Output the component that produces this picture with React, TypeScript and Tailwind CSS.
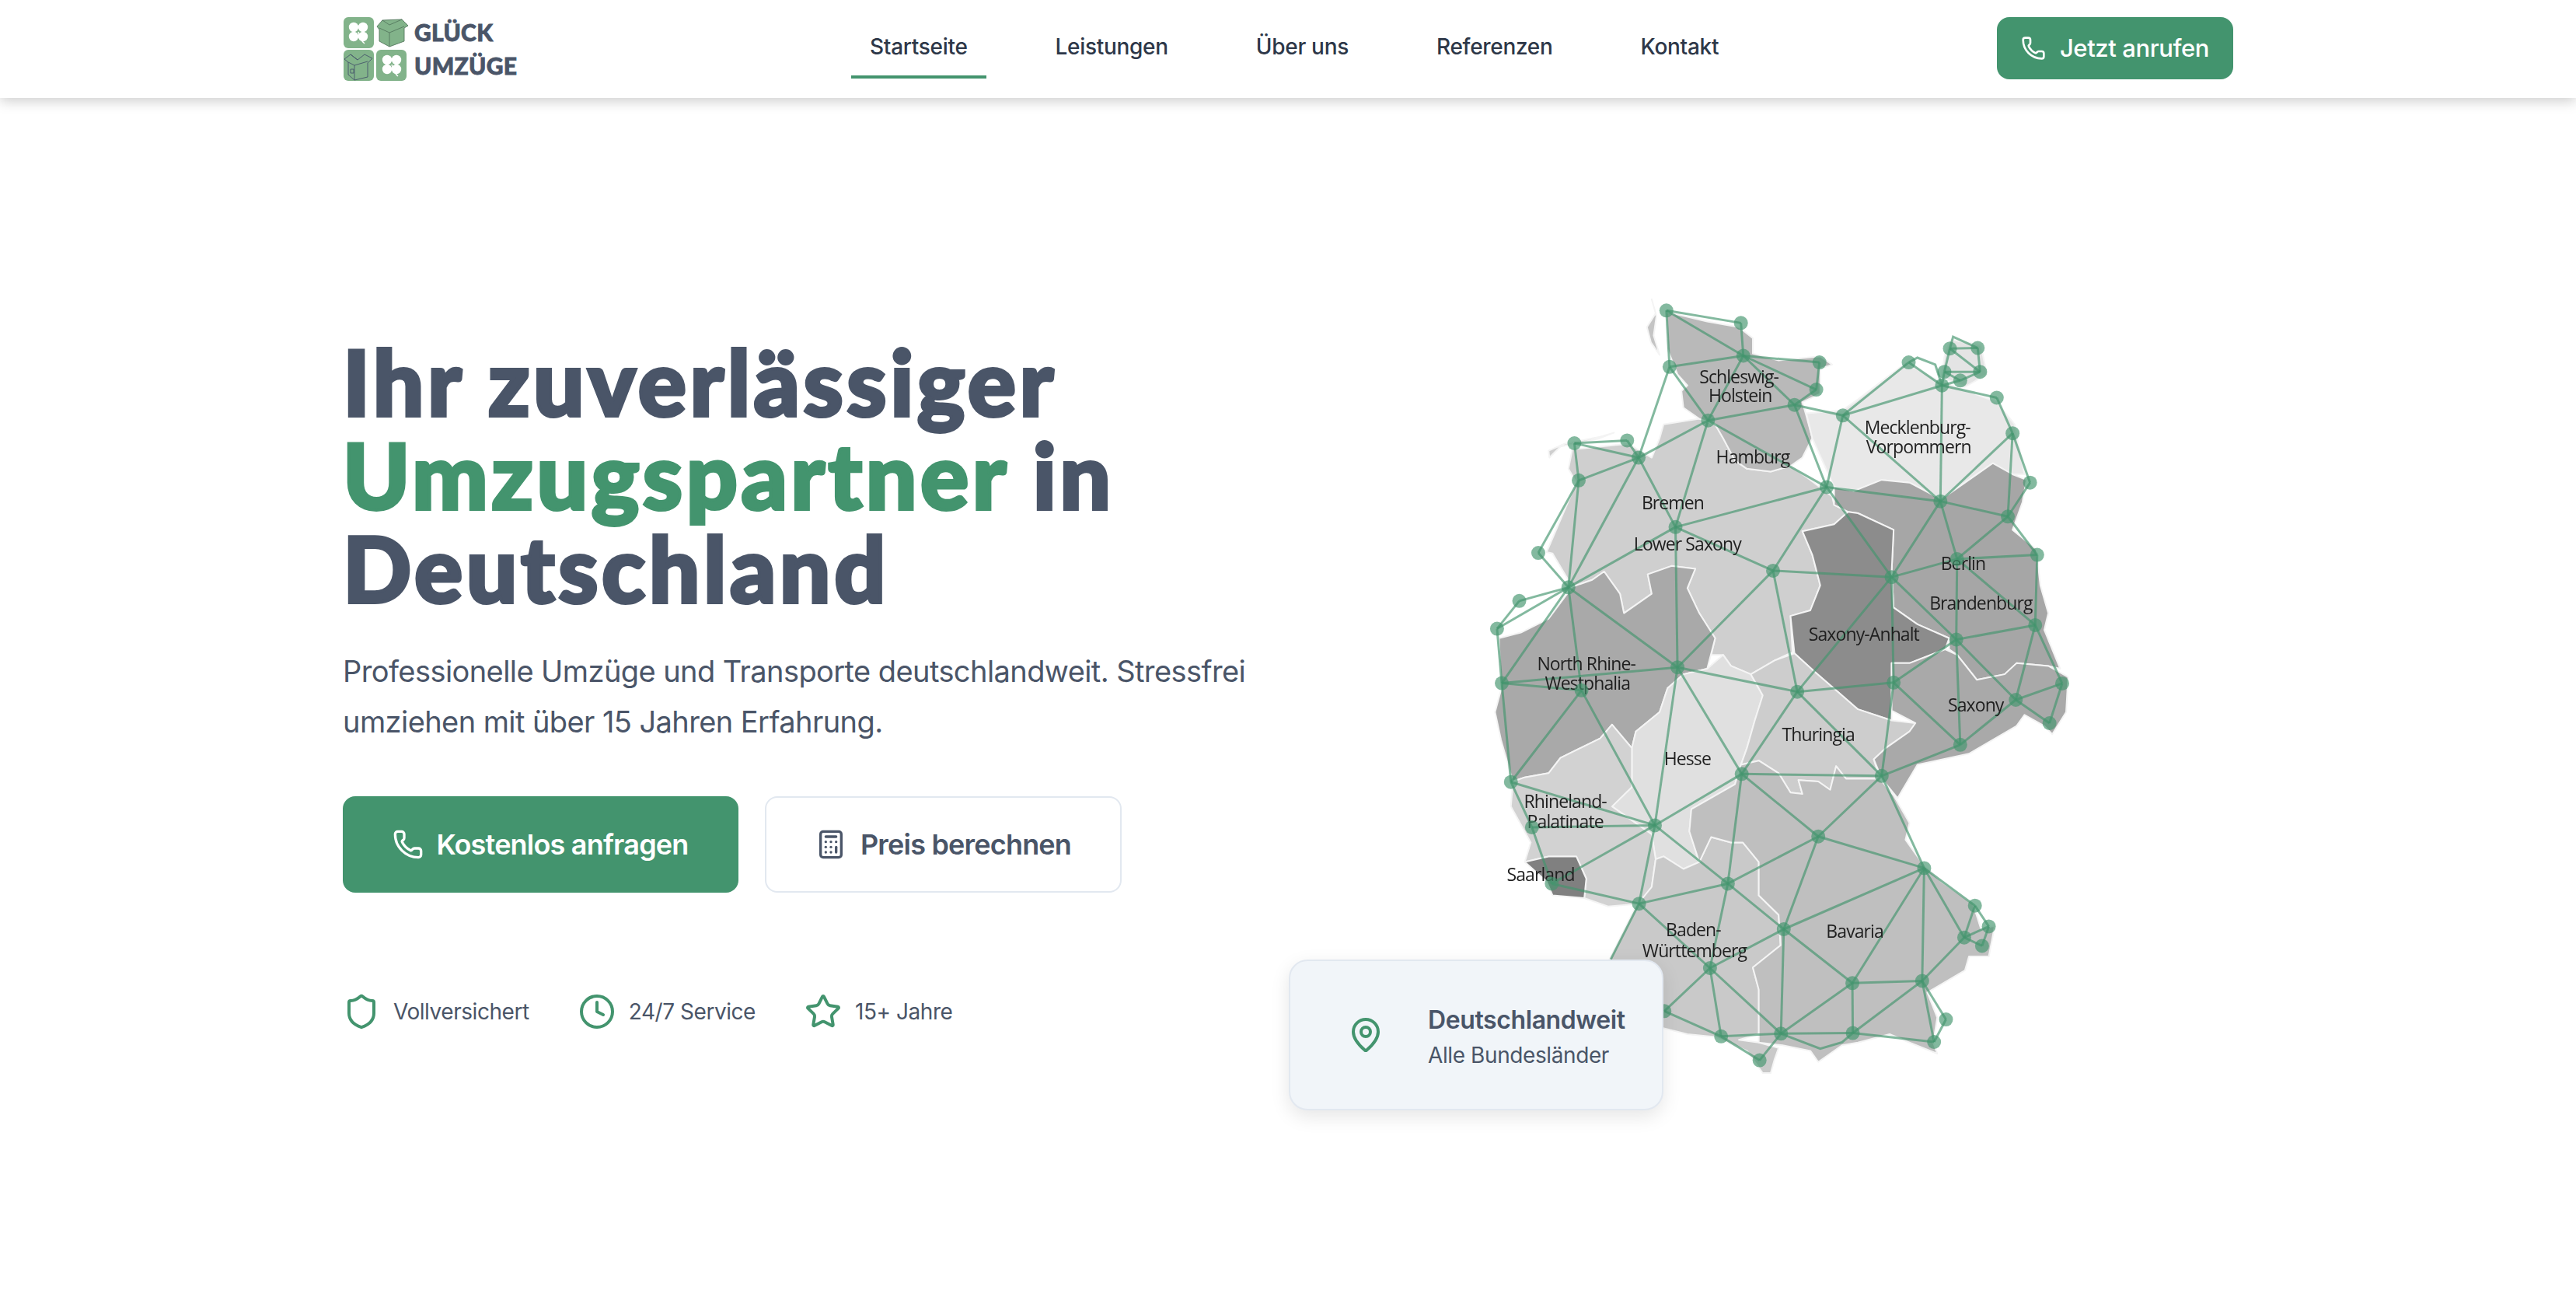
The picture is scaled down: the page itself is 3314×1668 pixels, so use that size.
import { Calculator, Clock, MapPin, Phone, Shield, Star } from "lucide-react";

type P = [number, number];
const OX = 1705;
const px = ([x, y]: P): P => [1880 + x / 1.96 - OX, y / 2.8];
const Z3 = 1456;
const z3 = (pts: number[][]): P[] => pts.map(([x, y]) => [x, y + Z3] as P);

const regions: { fill: string; pts: P[] }[] = [
  {
    fill: "#cfcfcf",
    pts: [[510,520],[600,500],[640,520],[660,570],[690,650],[720,680],[780,690],[830,670],[880,720],[935,780],[940,810],[975,835],[940,880],[860,905],[885,990],[905,1100],[880,1190],[830,1210],[835,1340],[790,1370],[730,1420],[680,1390],[660,1350],[630,1350],[640,1290],[600,1200],[570,1110],[590,1040],[530,1030],[470,1060],[480,1130],[410,1200],[400,1130],[360,1050],[330,1080],[280,1105],[230,985],[215,980],[290,730],[270,680],[280,610],[420,590],[480,640],[500,570]],
  },
  {
    fill: "#b9b9b9",
    pts: [[517,115],[620,150],[700,170],[735,210],[735,265],[800,290],[905,275],[935,305],[905,320],[905,410],[860,440],[870,490],[885,570],[860,640],[830,670],[780,690],[720,680],[690,650],[660,570],[640,520],[600,500],[560,460],[555,400],[570,380],[545,340],[520,250]],
  },
  {
    fill: "#e8e8e8",
    pts: [[870,480],[960,470],[1000,430],[1120,300],[1200,360],[1350,440],[1395,520],[1420,700],[1390,700],[1340,660],[1280,720],[1210,790],[1130,730],[1060,720],[990,760],[940,745],[885,570]],
  },
  {
    fill: "#a6a6a6",
    pts: [[940,745],[990,760],[1060,720],[1130,730],[1210,790],[1280,720],[1340,660],[1390,700],[1425,720],[1415,800],[1390,900],[1450,970],[1460,1100],[1480,1200],[1470,1260],[1510,1400],[1480,1390],[1400,1380],[1370,1420],[1300,1440],[1250,1350],[1230,1330],[1230,1290],[1150,1240],[1090,1180],[1085,1050],[1090,900],[1000,840],[975,835],[940,810]],
  },
  {
    fill: "#8c8c8c",
    pts: [[975,835],[1000,840],[1090,900],[1085,1050],[1090,1180],[1150,1240],[1230,1290],[1220,1330],[1130,1380],[1085,1380],[1085,1586],[1000,1546],[955,1490],[890,1410],[840,1345],[830,1210],[880,1190],[905,1100],[885,990],[860,905],[940,880]],
  },
  {
    fill: "#a9a9a9",
    pts: [[280,1105],[330,1080],[360,1050],[400,1130],[410,1200],[480,1130],[470,1060],[530,1030],[590,1040],[570,1110],[600,1200],[640,1290],[620,1400],[560,1420],[520,1470],[500,1556],[440,1626],[430,1686],[380,1601],[350,1651],[250,1721],[220,1776],[160,1791],[130,1806],[100,1656],[85,1556],[100,1476],[95,1290],[150,1270],[220,1220]],
  },
  {
    fill: "#e0e0e0",
    pts: [[520,1470],[560,1420],[620,1400],[660,1350],[680,1390],[730,1420],[760,1496],[740,1586],[720,1686],[705,1746],[690,1816],[580,1906],[575,1986],[600,2096],[560,2121],[510,2076],[490,2086],[480,1996],[380,1896],[430,1826],[430,1686],[440,1626],[500,1556]],
  },
  {
    fill: "#cdcdcd",
    pts: [[730,1420],[790,1370],[840,1345],[890,1410],[955,1490],[1000,1546],[1085,1586],[1145,1596],[1130,1626],[1070,1686],[1040,1726],[1055,1796],[970,1796],[945,1751],[930,1836],[900,1806],[850,1801],[860,1851],[830,1846],[800,1776],[750,1731],[705,1746],[720,1686],[740,1586],[760,1496]],
  },
  {
    fill: "#a9a9a9",
    pts: [[1085,1380],[1130,1380],[1220,1330],[1250,1350],[1300,1440],[1370,1420],[1400,1380],[1480,1390],[1530,1430],[1525,1556],[1490,1636],[1470,1606],[1420,1566],[1400,1606],[1280,1706],[1150,1746],[1100,1866],[1060,1796],[1040,1726],[1070,1686],[1130,1626],[1145,1596],[1085,1551]],
  },
  {
    fill: "#d2d2d2",
    pts: z3([[130,350],[160,335],[220,320],[250,265],[350,195],[380,145],[430,230],[430,370],[380,440],[480,540],[490,630],[480,730],[450,790],[370,800],[310,770],[315,700],[290,620],[220,620],[160,640],[175,570],[125,440]]),
  },
  {
    fill: "#808080",
    pts: z3([[160,640],[220,620],[290,620],[315,700],[310,770],[230,760],[215,710]]),
  },
  {
    fill: "#c9c9c9",
    pts: z3([[480,730],[490,630],[510,620],[560,665],[600,640],[630,550],[680,570],[710,570],[750,640],[750,760],[800,830],[805,940],[735,1020],[750,1100],[750,1260],[700,1280],[750,1290],[800,1310],[790,1350],[780,1400],[760,1400],[720,1320],[640,1270],[570,1260],[515,1240],[400,1200],[370,1000],[440,800]]),
  },
  {
    fill: "#bfbfbf",
    pts: z3([[575,530],[580,450],[690,360],[705,290],[750,275],[800,320],[830,390],[860,395],[850,345],[900,350],[930,380],[945,295],[970,340],[1055,340],[1090,400],[1130,500],[1120,560],[1165,650],[1210,710],[1290,790],[1310,880],[1345,870],[1330,980],[1280,980],[1270,1030],[1175,1110],[1200,1200],[1190,1290],[1200,1330],[1130,1290],[1080,1260],[1000,1290],[960,1300],[900,1360],[880,1320],[810,1300],[750,1290],[750,1100],[735,1020],[805,940],[800,830],[750,760],[750,640],[710,570],[680,570],[630,550],[600,640]]),
  },
  { fill: "#e4e4e4", pts: [[1235,215],[1310,235],[1325,340],[1270,385],[1210,350],[1220,260]] },
  { fill: "#c4c4c4", pts: [[480,70],[490,120],[468,170],[478,225],[500,270],[485,200],[492,130]] },
  { fill: "#cfcfcf", pts: [[220,615],[260,590],[350,565],[385,550],[345,572],[250,600],[222,640]] },
];

const N: Record<number, P> = {
  1:[517,110],2:[705,155],3:[711,273],4:[525,313],5:[903,297],6:[895,395],7:[840,450],8:[622,506],9:[962,488],10:[1128,297],
  11:[1212,380],12:[1232,247],13:[1302,245],14:[1308,331],15:[1218,331],16:[1258,362],17:[1350,424],18:[1390,552],19:[1434,730],20:[1378,852],
  21:[1208,797],22:[921,746],23:[285,588],24:[418,578],25:[447,640],26:[296,722],27:[540,890],28:[194,983],29:[270,1107],30:[786,1047],
  31:[1085,1070],32:[1250,1005],33:[1452,990],34:[146,1156],35:[90,1256],36:[1447,1243],37:[1248,1295],38:[545,1395],39:[102,1452],40:[303,1478],
  41:[847,1483],42:[1090,1450],43:[1398,1512],44:[1515,1453],45:[1483,1596],46:[1258,1674],47:[1060,1786],48:[707,1779],49:[125,1808],50:[488,1964],
  51:[178,1971],52:[900,2004],53:[1167,2118],54:[672,2174],55:[228,2174],56:[448,2246],57:[1295,2253],58:[1330,2328],59:[813,2338],60:[1268,2368],
  61:[1313,2398],62:[627,2478],63:[986,2532],64:[1162,2524],65:[1222,2663],66:[512,2633],67:[655,2724],68:[806,2714],69:[987,2712],70:[1192,2744],71:[752,2810],
};

const E: number[][] = [
  [1,2],[1,3],[1,4],[2,3],[3,4],[3,5],[3,6],[3,7],[3,8],[4,8],[4,25],[5,6],[6,7],[7,8],[7,9],[7,22],[8,25],[8,27],[8,22],[9,22],[9,10],[9,11],[10,11],
  [11,15],[11,16],[11,17],[11,21],[9,21],[12,13],[12,15],[13,14],[12,14],[15,14],[15,16],[16,14],[17,18],[18,19],[18,21],[18,20],[19,20],[20,21],[20,32],[20,33],
  [21,22],[21,31],[21,32],[22,27],[22,30],[22,31],[23,24],[23,25],[23,26],[24,25],[25,26],[25,27],[25,29],[26,28],[26,29],[27,29],[27,30],[27,38],[28,29],
  [29,34],[29,35],[29,38],[29,39],[29,40],[30,31],[30,38],[30,41],[31,32],[31,37],[31,41],[31,42],[32,33],[32,37],[32,36],[33,36],[36,37],[36,43],[36,44],
  [37,42],[37,43],[37,46],[38,39],[38,41],[38,50],[38,48],[34,35],[35,39],[39,49],[40,49],[40,50],[39,40],[41,42],[41,48],[41,47],[42,46],[42,47],
  [43,44],[43,45],[43,46],[44,45],[46,47],[47,48],[47,52],[47,53],[48,50],[48,52],[48,54],[49,50],[49,51],[50,51],[50,54],[50,55],[50,56],[51,55],[55,56],
  [56,54],[56,62],[54,52],[54,59],[54,62],[52,53],[52,59],[53,59],[53,57],[53,60],[53,63],[53,64],[57,58],[57,60],[58,60],[58,61],[60,61],[60,64],
  [59,62],[59,63],[59,68],[62,66],[62,67],[62,68],[63,64],[63,68],[63,69],[64,69],[64,70],[64,65],[65,70],[66,67],[67,68],[67,71],[68,69],[68,71],[69,70],
];

const extraLines: P[][] = [
  [N[10],[1150,280],[1195,305],N[11]],
  [N[12],[1240,205],N[13]],
  [N[68],[905,2768],[960,2745],N[69]],
  [N[56],[377,2446]],
];

const labels: [string, number, number][] = [
  ["Schleswig-",700,372],["Holstein",703,440],["Mecklenburg-",1150,553],["Vorpommern",1153,625],["Hamburg",735,660],["Bremen",533,825],
  ["Lower Saxony",570,975],["Berlin",1265,1045],["Brandenburg",1310,1188],["Saxony-Anhalt",1015,1300],["North Rhine-",315,1405],["Westphalia",318,1475],
  ["Saxony",1297,1555],["Thuringia",900,1661],["Hesse",570,1746],["Rhineland-",262,1901],["Palatinate",262,1973],["Saarland",200,2164],
  ["Baden-",585,2364],["Württemberg",588,2439],["Bavaria",992,2369],
];

function GermanyMap() {
  return (
    <svg viewBox="0 0 1168 1080" className="block h-[1080px] w-[1168px] blur-[0.6px]">
      {regions.map((r, i) => (
        <polygon key={i} points={r.pts.map((p) => px(p).join(",")).join(" ")} fill={r.fill} stroke="#f4f4f4" strokeWidth="2" strokeLinejoin="round" />
      ))}
      {E.map(([a, b], i) => {
        const [x1, y1] = px(N[a]);
        const [x2, y2] = px(N[b]);
        return <line key={i} x1={x1} y1={y1} x2={x2} y2={y2} stroke="#43946e" strokeOpacity="0.66" strokeWidth="3" />;
      })}
      {extraLines.map((l, i) => (
        <polyline key={i} points={l.map((p) => px(p).join(",")).join(" ")} fill="none" stroke="#43946e" strokeOpacity="0.66" strokeWidth="3" />
      ))}
      {labels.map(([t, x, y]) => {
        const [lx, ly] = px([x, y]);
        return (
          <text key={t} x={lx} y={ly} textAnchor="middle" fontSize="23" letterSpacing="-0.9" fill="#1f1f1f" fontFamily="'Open Sans', sans-serif">
            {t}
          </text>
        );
      })}
      {Object.values(N).map((p, i) => {
        const [cx, cy] = px(p);
        return <circle key={i} cx={cx} cy={cy} r="9" fill="#43946e" fillOpacity="0.66" />;
      })}
    </svg>
  );
}

function Clover({ x, y }: { x: number; y: number }) {
  return (
    <g transform={`translate(${x} ${y})`} fill="#ffffff">
      <circle cx="-6" cy="-6" r="6.2" />
      <circle cx="6" cy="-6" r="6.2" />
      <circle cx="-6" cy="6" r="6.2" />
      <circle cx="6" cy="6" r="6.2" />
      <path d="M0 0 Q2 10 8 15" fill="none" stroke="#ffffff" strokeWidth="1.4" />
    </g>
  );
}

function LogoMark() {
  return (
    <svg viewBox="0 0 84 84" className="h-[84px] w-[84px] shrink-0">
      <rect x="1" y="1" width="39" height="40" rx="6" fill="#82b38a" />
      <rect x="1" y="43" width="39" height="40" rx="6" fill="#82b38a" />
      <rect x="43" y="43" width="39" height="40" rx="6" fill="#82b38a" />
      <Clover x={20} y={20} />
      <Clover x={63} y={62} />
      <g stroke="#55785f" strokeWidth="0.9" fill="#82b38a" strokeLinejoin="round">
        <path d="M44 13 L51 5 L76 4 L84 12 L79 15 L79 32 L60 39 L47 32 L47 17 Z" />
        <path d="M47 15 L60 21 L79 13 M60 21 L60 39 M51 5 L60 11 L76 4" fill="none" />
      </g>
      <g stroke="#46566b" strokeWidth="0.9" fill="none" strokeLinejoin="round">
        <path d="M2 55 L10 49 L19 56 L28 49 L38 54 L32 60 L32 78 L15 82 L7 75 L7 59 Z" />
        <path d="M7 59 L15 63 L32 58 M15 63 L15 82 M10 49 L19 56" />
        <rect x="10" y="68" width="4" height="5" />
      </g>
    </svg>
  );
}

const navItems = ["Leistungen", "Über uns", "Referenzen", "Kontakt"];

function Header() {
  return (
    <header className="relative z-10 h-[126px] bg-white shadow-[0_4px_16px_rgba(0,0,0,0.2)]">
      <div className="mx-auto flex h-full w-[2432px] items-center">
        <div className="flex w-[224px] items-center gap-[8px]">
          <LogoMark />
          <div className="font-['Lato',sans-serif] text-[30px] leading-[43px] font-black tracking-[0.3px] text-[#4a5568] [-webkit-text-stroke-width:0.8px]">
            <div>GLÜCK</div>
            <div>UMZÜGE</div>
          </div>
        </div>
        <nav className="mt-[-3px] ml-[430px] flex items-center gap-[65px] text-[28px] font-medium tracking-[-0.3px] text-[#2d3748]">
          <a className="flex h-[78px] items-center border-b-4 border-[#43946e] px-[24px]">Startseite</a>
          {navItems.map((n) => (
            <a key={n} className="flex h-[78px] items-center border-b-4 border-transparent px-[24px]">{n}</a>
          ))}
        </nav>
        <a className="mb-[2px] ml-auto flex h-[80px] w-[304px] items-center justify-center gap-[18px] rounded-[16px] bg-[#43946e] text-[31px] font-medium tracking-[-0.4px] text-white">
          <Phone size={32} strokeWidth={2} />
          Jetzt anrufen
        </a>
      </div>
    </header>
  );
}

const trust = [
  { icon: Shield, text: "Vollversichert" },
  { icon: Clock, text: "24/7 Service" },
  { icon: Star, text: "15+ Jahre" },
];

function Hero() {
  return (
    <section className="mx-auto grid w-[2432px] grid-cols-2 gap-[96px] pt-[234px]">
      <div className="mt-[71px]">
        <h1 className="font-['Lato',sans-serif] text-[116px] leading-[120px] font-black tracking-[4.5px] text-[#4a5568] [-webkit-text-stroke-width:4px]">
          Ihr zuverlässiger
          <br />
          <span className="text-[#43946e]">Umzugspartner</span> in
          <br />
          Deutschland
        </h1>
        <p className="mt-[40px] text-[38px] leading-[65px] tracking-[-0.58px] text-[#4a5568]">
          Professionelle Umzüge und Transporte deutschlandweit. Stressfrei umziehen mit über 15 Jahren Erfahrung.
        </p>
        <div className="mt-[63px] flex gap-[34px]">
          <a className="flex h-[124px] w-[509px] items-center justify-center gap-[16px] rounded-[16px] bg-[#43946e] text-[36px] font-semibold tracking-[-0.8px] text-white">
            <Phone size={40} strokeWidth={2} />
            Kostenlos anfragen
          </a>
          <a className="flex h-[124px] w-[459px] items-center justify-center gap-[18px] rounded-[16px] border-2 border-[#e2e8f0] bg-white text-[36px] font-semibold tracking-[-0.8px] text-[#4a5568]">
            <Calculator size={40} strokeWidth={2} />
            Preis berechnen
          </a>
        </div>
        <div className="mt-[129px] flex items-center gap-[63px] text-[28px] tracking-[-0.45px] text-[#4a5568]">
          {trust.map(({ icon: Icon, text }) => (
            <div key={text} className="flex items-center gap-[17px]">
              <Icon size={48} strokeWidth={2} className="text-[#43946e]" />
              {text}
            </div>
          ))}
        </div>
      </div>
      <div className="relative h-[1080px]">
        <GermanyMap />
        <div className="absolute top-[874px] left-[-47px] flex h-[194px] w-[482px] items-center gap-[56px] rounded-[24px] border-2 border-[#e2e8f0] bg-[#f1f5f9] pl-[73px] shadow-[0_8px_24px_rgba(0,0,0,0.1)]">
          <MapPin size={48} strokeWidth={2} className="text-[#43946e]" />
          <div className="mt-[6px] tracking-[-0.4px]">
            <div className="text-[32px] leading-[46px] font-semibold text-[#4a5568]">Deutschlandweit</div>
            <div className="text-[28px] leading-[44px] text-[#4a5568]">Alle Bundesländer</div>
          </div>
        </div>
      </div>
    </section>
  );
}

export default function App() {
  return (
    <div className="h-[1668px] overflow-hidden bg-white font-['Inter',sans-serif]">
      <Header />
      <Hero />
    </div>
  );
}
